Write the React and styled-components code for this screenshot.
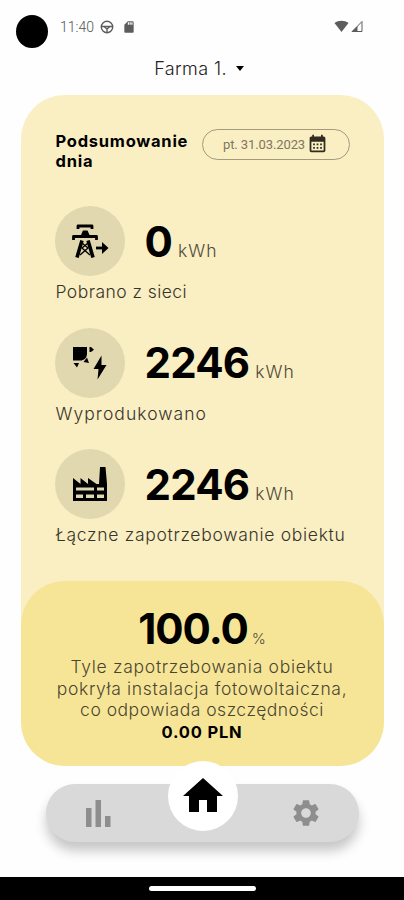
import styled, { createGlobalStyle } from 'styled-components'
import { MdCalendarMonth, MdSettings, MdSdCard, MdHome } from 'react-icons/md'

const GlobalStyle = createGlobalStyle`
* {
  box-sizing: border-box;
}
body {
  margin: 0;
  background: #fefefe;
  font-family: Inter, "Open Sans", sans-serif;
  color: #000;
}
p {
  margin: 0;
}
button {
  border: none;
  background: none;
  padding: 0;
  font: inherit;
}
svg {
  display: block;
  flex-shrink: 0;
}
`

const Screen = styled.div`
width: 404px;
height: 900px;
display: flex;
flex-direction: column;
align-items: center;
overflow: hidden;
`

const StatusBar = styled.header`
width: 100%;
height: 53px;
padding: 0 41px 0 16px;
display: flex;
align-items: center;
color: #5c5c5c;
`

const Camera = styled.div`
width: 32px;
height: 33px;
margin: 9px 12px 0 0;
border-radius: 50%;
background: #000;
`

const Clock = styled.span`
width: 40px;
font-family: Roboto, sans-serif;
font-size: 14px;
font-weight: 300;
color: #555;
`

const StatusIcons = styled.div`
display: flex;
align-items: center;
gap: ${(props) => props.$gap}px;
margin-left: ${(props) => (props.$end ? 'auto' : '0')};
`

const FarmSelect = styled.button`
height: 32px;
margin-bottom: 10px;
padding: 0 6px 1px 0;
display: flex;
align-items: center;
gap: 9px;
font-size: 18px;
font-weight: 300;
letter-spacing: 0.4px;
color: #222;
`

const Caret = styled.span`
border: 4.5px solid transparent;
border-top: 5px solid #000;
border-bottom: 0;
`

const Card = styled.main`
width: 363px;
height: 671px;
border-radius: 44px;
background: #faeec3;
display: flex;
flex-direction: column;
justify-content: space-between;
`

const CardHeader = styled.div`
height: 111px;
padding: 34px 34px 0 35px;
display: flex;
justify-content: space-between;
align-items: flex-start;
`

const Heading = styled.h1`
width: 140px;
margin: 2px 0 0;
font-size: 16.5px;
line-height: 20px;
font-weight: 700;
letter-spacing: 0.75px;
`

const DateButton = styled.button`
width: 148px;
height: 31px;
border: 1px solid #a39b7c;
border-radius: 16px;
display: flex;
align-items: center;
justify-content: center;
gap: 2px;
font-family: Roboto, sans-serif;
font-size: 13px;
letter-spacing: -0.1px;
color: #7d775f;
svg {
  color: #302d20;
  margin-top: -2px;
}
`

const Stats = styled.section`
flex: 1;
padding-left: 34px;
display: flex;
flex-direction: column;
gap: 21.5px;
`

const Stat = styled.div`
height: 100px;
display: flex;
flex-direction: column;
`

const StatRow = styled.div`
display: flex;
align-items: center;
gap: 20px;
`

const IconCircle = styled.div`
width: 70px;
height: 70px;
border-radius: 50%;
background: #e2d8b0;
display: flex;
align-items: center;
justify-content: center;
`

const Value = styled.p`
display: flex;
align-items: baseline;
gap: ${(props) => props.$gap || 6}px;
margin-top: 1px;
`

const Amount = styled.span`
font-size: 42px;
line-height: 50px;
font-weight: 700;
letter-spacing: ${(props) => props.$spacing || 0}px;
`

const Unit = styled.span`
font-size: 17.5px;
font-weight: 300;
letter-spacing: 1px;
color: #4f4a38;
`

const Label = styled.p`
margin: 4px 0 0 1px;
font-size: 17.5px;
line-height: 24px;
font-weight: 300;
letter-spacing: ${(props) => props.$spacing}px;
white-space: nowrap;
color: #37342a;
`

const Coverage = styled.section`
height: 185px;
padding-top: 22px;
border-radius: 44px;
background: #f7e597;
display: flex;
flex-direction: column;
align-items: center;
`

const Percent = styled(Unit)`
font-size: 15px;
letter-spacing: 0;
`

const Description = styled.p`
margin-top: 2px;
text-align: center;
font-size: 17.5px;
line-height: 21.5px;
font-weight: 300;
color: #4b4530;
white-space: nowrap;
`

const Line = styled.span`
display: block;
letter-spacing: ${(props) => props.$spacing}px;
`

const Savings = styled.strong`
display: block;
font-size: 16.5px;
line-height: 22px;
font-weight: 700;
letter-spacing: 0.8px;
color: #000;
`

const Nav = styled.nav`
width: 313px;
height: 58px;
margin-top: 18px;
padding: 0 37px 0 38px;
border-radius: 29px;
background: #d9d9d9;
box-shadow: 0 9px 12px rgba(0, 0, 0, 0.22);
display: flex;
align-items: center;
justify-content: space-between;
color: #8e8e8e;
`

const HomeButton = styled.button`
width: 70px;
height: 70px;
margin: -35px 0 0 4px;
border-radius: 50%;
background: #fff;
color: #000;
display: flex;
align-items: center;
justify-content: center;
`

const SystemBar = styled.footer`
width: 100%;
height: 23px;
margin-top: auto;
background: #000;
display: flex;
justify-content: center;
padding-top: 9px;
`

const Handle = styled.div`
width: 107px;
height: 5px;
border-radius: 3px;
background: #fff;
`

const WheelIcon = () => (
    <svg width="14" height="14" viewBox="0 0 14 14" fill="none" stroke="currentColor" strokeWidth="1.4">
        <circle cx="7" cy="7" r="5.7" />
        <path d="M1.5 6.5h11M4.5 7l2.5 2v4M9.5 7L7 9" />
    </svg>
)

const WifiIcon = () => (
    <svg width="15" height="13" viewBox="0 0 15 13">
        <path d="M.5 3C4.500 0 10.500 0 14.500 3L7.500 12z" fill="currentColor" />
    </svg>
)

const SignalIcon = () => (
    <svg width="12" height="13" viewBox="0 0 12 13">
        <path d="M1.200 11.500L11 1.500v10z" fill="none" stroke="currentColor" strokeWidth="1" />
        <path d="M.500 12L6.500 6V12z" fill="currentColor" />
    </svg>
)

const PylonIcon = () => (
    <svg width="38" height="36" viewBox="0 0 38 36" fill="none" stroke="#000" strokeWidth="2.800" strokeLinejoin="round">
        <path d="M7 6V3H21V6M2.500 17v-3.500h23V17" />
        <path d="M9.500 13L12 7.500h4.500L19 13z" fill="#000" stroke="none" />
        <path d="M11 17.500L6 34.500M17 17.500l5 17" strokeWidth="3.600" />
        <path d="M11 20l6 5-8 7M17 20l-6 5 8 7" strokeWidth="1.400" />
        <path d="M25 25h8" />
        <path d="M31 19l6.500 6L31 31z" fill="#000" stroke="none" />
    </svg>
)

const SolarIcon = () => (
    <svg width="35" height="34" viewBox="0 0 35 34">
        <path d="M1 1h14v6.500c0 4.500-3 7-7 7H1z" />
        <path d="M17.500 1h1.500l3 2.800-3 2.200h-1.500zM15 11.500l2 5.500-5.500-1zM1.500 17h5.500L5 21.500z" />
        <path d="M29.500 9.500L21.500 23h5l-1 10.500 9-14.500h-5z" />
    </svg>
)

const FactoryIcon = () => (
    <svg width="34" height="34" viewBox="0 0 34 34">
        <path d="M0 34V11l7.500 6v-6l7.500 6v-6l8.500 6L26 17 27 0h5.500L34 17v17z" />
        <path d="M3 20.500h18v3H3zM24 20.500h7v3h-7zM3 27.500h7v3.500H3zM13 27.500h8v3.500h-8zM24 27.500h7v3.500h-7z" fill="#e2d8b0" />
    </svg>
)

const ChartIcon = () => (
    <svg width="28" height="30" viewBox="0 0 28 30" fill="currentColor">
        <path d="M2 10h5.500v19H2zM11.500 2H17v27h-5.500zM21 18h5.500v11H21z" />
    </svg>
)

const stats = [
    { icon: <PylonIcon />, amount: '0', label: 'Pobrano z sieci', spacing: 0.45 },
    { icon: <SolarIcon />, amount: '2246', label: 'Wyprodukowano', spacing: 1.05 },
    { icon: <FactoryIcon />, amount: '2246', label: 'Łączne zapotrzebowanie obiektu', spacing: 0.7 },
]

const StatItem = ({ icon, amount, label, spacing }) => {
    return (
        <Stat>
            <StatRow>
                <IconCircle>{icon}</IconCircle>
                <Value>
                    <Amount $spacing={-0.8}>{amount}</Amount>
                    <Unit>kWh</Unit>
                </Value>
            </StatRow>
            <Label $spacing={spacing}>{label}</Label>
        </Stat>
    )
}

export default function App() {
    return (
        <Screen>
            <GlobalStyle />
            <StatusBar>
                <Camera />
                <Clock>11:40</Clock>
                <StatusIcons $gap={8}>
                    <WheelIcon />
                    <MdSdCard size={14} />
                </StatusIcons>
                <StatusIcons $gap={2} $end>
                    <WifiIcon />
                    <SignalIcon />
                </StatusIcons>
            </StatusBar>
            <FarmSelect>
                Farma 1.
                <Caret />
            </FarmSelect>
            <Card>
                <CardHeader>
                    <Heading>Podsumowanie dnia</Heading>
                    <DateButton>
                        pt. 31.03.2023
                        <MdCalendarMonth size={21} />
                    </DateButton>
                </CardHeader>
                <Stats>
                    {stats.map((stat) => (
                        <StatItem key={stat.label} {...stat} />
                    ))}
                </Stats>
                <Coverage>
                    <Value $gap={4}>
                        <Amount $spacing={-1}>100.0</Amount>
                        <Percent>%</Percent>
                    </Value>
                    <Description>
                        <Line $spacing={0.7}>Tyle zapotrzebowania obiektu</Line>
                        <Line $spacing={0.65}>pokryła instalacja fotowoltaiczna,</Line>
                        <Line $spacing={0.5}>co odpowiada oszczędności</Line>
                        <Savings>0.00 PLN</Savings>
                    </Description>
                </Coverage>
            </Card>
            <Nav>
                <ChartIcon />
                <HomeButton>
                    <MdHome size={48} />
                </HomeButton>
                <MdSettings size={32} />
            </Nav>
            <SystemBar>
                <Handle />
            </SystemBar>
        </Screen>
    )
}
